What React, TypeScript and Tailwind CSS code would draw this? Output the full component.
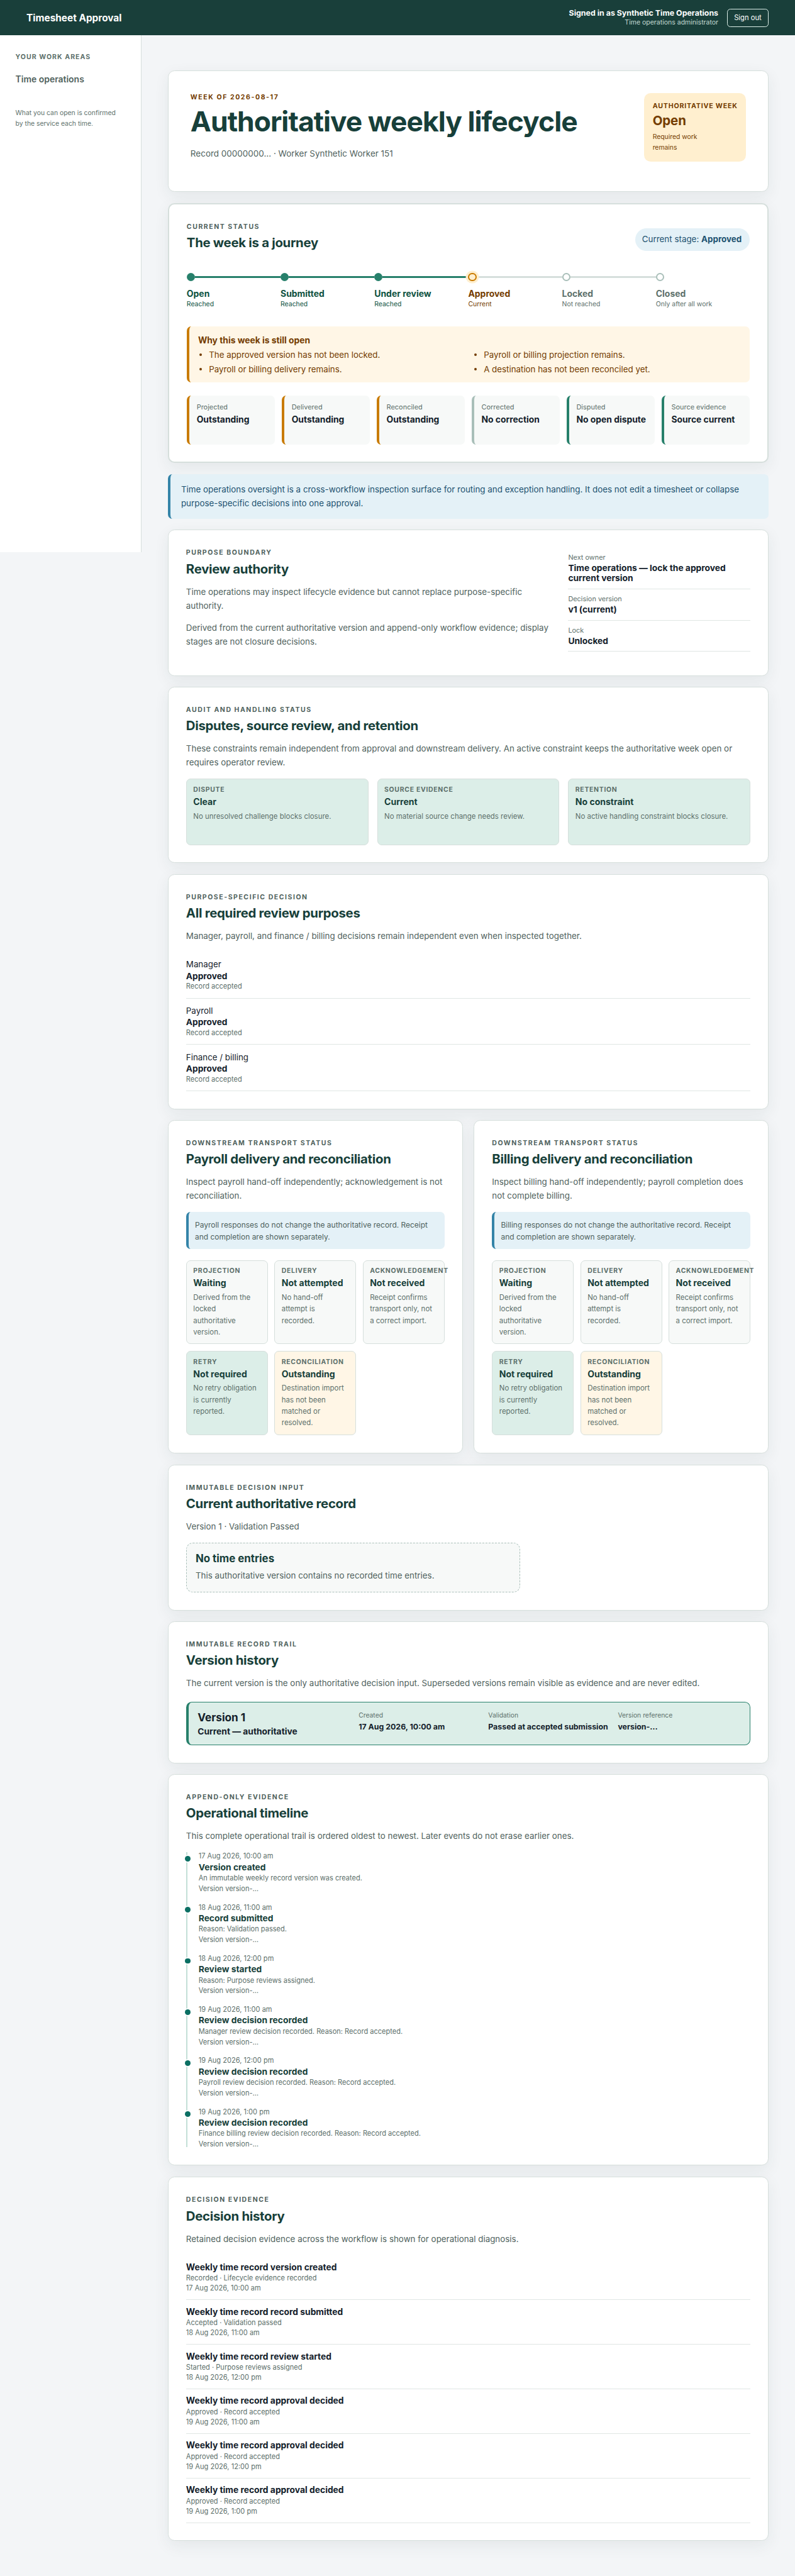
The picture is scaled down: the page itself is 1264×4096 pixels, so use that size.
import React from 'react'
import clsx from 'clsx'

type Tone = 'neutral' | 'good' | 'warn'

const steps = [
  { name: 'Open', note: 'Reached', state: 'done' },
  { name: 'Submitted', note: 'Reached', state: 'done' },
  { name: 'Under review', note: 'Reached', state: 'done' },
  { name: 'Approved', note: 'Current', state: 'current' },
  { name: 'Locked', note: 'Not reached', state: 'todo' },
  { name: 'Closed', note: 'Only after all work', state: 'todo' },
]

const openReasons = [
  'The approved version has not been locked.',
  'Payroll or billing projection remains.',
  'Payroll or billing delivery remains.',
  'A destination has not been reconciled yet.',
]

const facts = [
  { label: 'Projected', value: 'Outstanding', edge: 'border-[#c97b00]' },
  { label: 'Delivered', value: 'Outstanding', edge: 'border-[#c97b00]' },
  { label: 'Reconciled', value: 'Outstanding', edge: 'border-[#c97b00]' },
  { label: 'Corrected', value: 'No correction', edge: 'border-[#a9bfb9]' },
  { label: 'Disputed', value: 'No open dispute', edge: 'border-[#27806b]' },
  { label: 'Source evidence', value: 'Source current', edge: 'border-[#27806b]' },
]

const authority = [
  { label: 'Next owner', value: 'Time operations — lock the approved\ncurrent version' },
  { label: 'Decision version', value: 'v1 (current)' },
  { label: 'Lock', value: 'Unlocked' },
]

const constraints: BoxProps[] = [
  { label: 'Dispute', value: 'Clear', detail: 'No unresolved challenge blocks closure.', tone: 'good' },
  { label: 'Source evidence', value: 'Current', detail: 'No material source change needs review.', tone: 'good' },
  { label: 'Retention', value: 'No constraint', detail: 'No active handling constraint blocks closure.', tone: 'good' },
]

const deliveryBoxes: BoxProps[] = [
  { label: 'Projection', value: 'Waiting', detail: 'Derived from the\nlocked\nauthoritative\nversion.', tone: 'neutral' },
  { label: 'Delivery', value: 'Not attempted', detail: 'No hand-off\nattempt is\nrecorded.', tone: 'neutral' },
  { label: 'Acknowledgement', value: 'Not received', detail: 'Receipt confirms\ntransport only, not\na correct import.', tone: 'neutral' },
  { label: 'Retry', value: 'Not required', detail: 'No retry obligation\nis currently\nreported.', tone: 'good' },
  { label: 'Reconciliation', value: 'Outstanding', detail: 'Destination import\nhas not been\nmatched or\nresolved.', tone: 'warn' },
]

const timeline = [
  { date: '17 Aug 2026, 10:00 am', title: 'Version created', note: 'An immutable weekly record version was created.' },
  { date: '18 Aug 2026, 11:00 am', title: 'Record submitted', note: 'Reason: Validation passed.' },
  { date: '18 Aug 2026, 12:00 pm', title: 'Review started', note: 'Reason: Purpose reviews assigned.' },
  { date: '19 Aug 2026, 11:00 am', title: 'Review decision recorded', note: 'Manager review decision recorded. Reason: Record accepted.' },
  { date: '19 Aug 2026, 12:00 pm', title: 'Review decision recorded', note: 'Payroll review decision recorded. Reason: Record accepted.' },
  { date: '19 Aug 2026, 1:00 pm', title: 'Review decision recorded', note: 'Finance billing review decision recorded. Reason: Record accepted.' },
]

const decisions = [
  { title: 'Weekly time record version created', note: 'Recorded · Lifecycle evidence recorded', date: '17 Aug 2026, 10:00 am' },
  { title: 'Weekly time record record submitted', note: 'Accepted · Validation passed', date: '18 Aug 2026, 11:00 am' },
  { title: 'Weekly time record review started', note: 'Started · Purpose reviews assigned', date: '18 Aug 2026, 12:00 pm' },
  { title: 'Weekly time record approval decided', note: 'Approved · Record accepted', date: '19 Aug 2026, 11:00 am' },
  { title: 'Weekly time record approval decided', note: 'Approved · Record accepted', date: '19 Aug 2026, 12:00 pm' },
  { title: 'Weekly time record approval decided', note: 'Approved · Record accepted', date: '19 Aug 2026, 1:00 pm' },
]

interface CardProps {
  className?: string
  children: React.ReactNode
}

const Card = ({ className, children }: CardProps) => (
  <section
    className={clsx(
      'rounded-[12px] border-[#d6dfdc] bg-white shadow-[0_8px_28px_rgba(23,63,58,0.07)]',
      className,
    )}
  >
    {children}
  </section>
)

interface HeadingProps {
  eyebrow: string
  title: string
  low?: boolean
}

const Heading = ({ eyebrow, title, low }: HeadingProps) => (
  <div>
    <p className="text-[12px] leading-[18px] font-bold tracking-[1.75px] text-[#4f625d] uppercase">{eyebrow}</p>
    <h2
      className={clsx(
        'text-[23.2px] leading-[30px] font-bold tracking-[-0.34px] text-[#173f3a]',
        low ? 'mt-[6.2px]' : 'mt-[4.9px]',
      )}
    >
      {title}
    </h2>
  </div>
)

const Lead = ({ children }: { children: React.ReactNode }) => (
  <p className="mt-[14.2px] text-[15.26px] leading-[24.8px] whitespace-pre-line text-[#4f625d]">{children}</p>
)

interface BoxProps {
  label: string
  value: string
  detail: string
  tone: Tone
}

const Box = ({ label, value, detail, tone }: BoxProps) => (
  <div
    className={clsx(
      'rounded-[8px] border border-[#d6dfdc] px-[12px] pt-[10px]',
      tone === 'neutral' && 'bg-[#f7f9f8]',
      tone === 'good' && 'bg-[#dceee8]',
      tone === 'warn' && 'bg-[#fff6e6]',
    )}
  >
    <p className="text-[11.9px] leading-[18px] font-bold tracking-[0.8px] whitespace-nowrap text-[#5d706b] uppercase">{label}</p>
    <p className="text-[16px] leading-[24px] font-bold text-[#173f3a]">{value}</p>
    <p className="mt-[4.3px] text-[13.04px] leading-[20.8px] whitespace-pre-line text-[#5d706b]">{detail}</p>
  </div>
)

const Header = () => (
  <header className="flex h-[64px] items-start justify-between bg-[#193f3a] px-[48px] text-white">
    <p className="mt-[20px] text-[17.52px] leading-[26px] font-bold">Timesheet Approval</p>
    <div className="flex">
      <div className="mt-[15.2px] text-right">
        <p className="text-[14.13px] leading-[18px] font-bold">Signed in as Synthetic Time Operations</p>
        <p className="text-[12.01px] leading-[17px] text-[#c3dad3]">Time operations administrator</p>
      </div>
      <button className="mt-[16px] ml-[16px] h-[33px] w-[75px] rounded-[6px] border border-[#dceee8] pb-px text-[12.8px] font-normal">
        Sign out
      </button>
    </div>
  </header>
)

const Sidebar = () => (
  <aside className="h-[936px] w-[256px] shrink-0 border-r border-[#d6dfdc] bg-white px-[28px] pt-[30.7px]">
    <p className="text-[12px] leading-[18px] font-bold tracking-[1.2px] text-[#5d706b]">YOUR WORK AREAS</p>
    <p className="mt-[18.8px] text-[15.9px] leading-[26px] font-semibold text-[#4f625d]">Time operations</p>
    <p className="mt-[38.7px] text-[11.86px] leading-[19.1px] text-[#5d706b]">
      What you can open is confirmed
      <br />
      by the service each time.
    </p>
  </aside>
)

const Hero = () => (
  <Card className="flex h-[220px] items-start justify-between border p-[40px]">
    <div>
      <p className="text-[12px] leading-[16px] font-bold tracking-[1.8px] text-[#743c00]">WEEK OF 2026-08-17</p>
      <h1 className="mt-[10px] text-[50.6px] leading-[52px] font-bold tracking-[-1.12px] text-[#173f3a]">
        Authoritative weekly lifecycle
      </h1>
      <p className="mt-[19.7px] text-[15.37px] leading-[25px] text-[#4f625d]">
        Record 00000000… · Worker Synthetic Worker 151
      </p>
    </div>
    <div className="h-[124px] w-[185px] rounded-[12px] bg-[#ffefcf] px-[16px] pt-[14px] text-[#743c00]">
      <p className="text-[12.2px] leading-[19px] font-bold tracking-[0.88px] whitespace-nowrap">AUTHORITATIVE WEEK</p>
      <p className="mt-[2.7px] text-[23.3px] leading-[28px] font-bold tracking-[-0.1px]">Open</p>
      <p className="mt-[6.5px] text-[11.84px] leading-[19.1px]">
        Required work
        <br />
        remains
      </p>
    </div>
  </Card>
)

const Journey = () => (
  <ol className="mt-[39.1px] flex">
    {steps.map((step, i) => (
      <li key={step.name} className="w-[170px]">
        <div className="flex h-[15px] items-center">
          {step.state === 'done' && <span className="size-[15px] shrink-0 rounded-full bg-[#27806b]" />}
          {step.state === 'current' && (
            <span className="z-10 size-[15px] shrink-0 rounded-full border-[2.3px] border-[#c97b00] bg-[#ffefcf] shadow-[0_0_0_4px_#ffefcf]" />
          )}
          {step.state === 'todo' && <span className="size-[15px] shrink-0 rounded-full border-[2.3px] border-[#a9bfb9] bg-white" />}
          {i < steps.length - 1 && (
            <span className={clsx('h-[3px] flex-1', step.state === 'done' ? 'bg-[#27806b]' : 'bg-[#d6dfdc]')} />
          )}
        </div>
        <div
          className={clsx(
            step.state === 'done' && 'text-[#0d5140]',
            step.state === 'current' && 'text-[#743c00]',
            step.state === 'todo' && 'text-[#5d706b]',
          )}
        >
          <p className="mt-[12.5px] text-[15.9px] leading-[20px] font-bold">{step.name}</p>
          <p className="mt-px text-[11.91px] leading-[18px]">{step.note}</p>
        </div>
      </li>
    ))}
  </ol>
)

const CurrentStatus = () => (
  <Card className="h-[470.7px] border-[2.3px] px-[32px] pt-[32px]">
    <div className="flex items-start justify-between">
      <Heading eyebrow="Current status" title="The week is a journey" />
      <p className="mt-[11px] h-[41px] w-[207px] rounded-full bg-[#e4f1f7] px-[12px] text-[15.26px] leading-[41px] whitespace-nowrap text-[#1d5270]">
        Current stage: <strong className="font-bold">Approved</strong>
      </p>
    </div>
    <Journey />
    <div className="mt-[30.5px] h-[102px] rounded-[8px] border-l-[4.6px] border-[#c97b00] bg-[#fff6e6] px-[16px] pt-[14px] text-[#743c00]">
      <h3 className="text-[15.78px] leading-[23px] font-bold">Why this week is still open</h3>
      <ul className="mt-[1.6px] grid grid-cols-[498px_1fr] text-[15.21px] leading-[26px]">
        {openReasons.map((reason) => (
          <li key={reason} className="flex items-center">
            <span className="mr-[12.2px] ml-[2.5px] size-[5px] rounded-full bg-[#743c00]" />
            {reason}
          </li>
        ))}
      </ul>
    </div>
    <div className="mt-[24px] grid grid-cols-6 gap-[12px]">
      {facts.map((fact) => (
        <div key={fact.label} className={clsx('h-[88px] rounded-[8px] border-l-[4.6px] bg-[#f7f9f8] pt-[11.7px] pl-[13.5px]', fact.edge)}>
          <p className="text-[12.49px] leading-[18px] text-[#5d706b]">{fact.label}</p>
          <p className="mt-[2.7px] text-[15.8px] leading-[22px] font-bold whitespace-nowrap text-[#14212b]">{fact.value}</p>
        </div>
      ))}
    </div>
  </Card>
)

const ReviewAuthority = () => (
  <Card className="flex h-[265px] justify-between border px-[32px] pt-[32px]">
    <div className="w-[668px]">
      <Heading eyebrow="Purpose boundary" title="Review authority" low />
      <Lead>{'Time operations may inspect lifecycle evidence but cannot replace purpose-specific\nauthority.'}</Lead>
      <p className="mt-[15.5px] text-[15.26px] leading-[24.8px] whitespace-pre-line text-[#4f625d]">
        {'Derived from the current authoritative version and append-only workflow evidence; display\nstages are not closure decisions.'}
      </p>
    </div>
    <dl className="w-[330px]">
      {authority.map((item) => (
        <div key={item.label} className="border-b border-[#e0e6e4] pt-[9.4px] pb-[9px]">
          <dt className="text-[12.45px] leading-[17px] text-[#5d706b]">{item.label}</dt>
          <dd className="mt-[2.2px] text-[15.74px] leading-[18px] font-bold whitespace-pre-line text-[#14212b]">{item.value}</dd>
        </div>
      ))}
    </dl>
  </Card>
)

const Constraints = () => (
  <Card className="h-[319.2px] border px-[32px] pt-[32px]">
    <Heading eyebrow="Audit and handling status" title="Disputes, source review, and retention" />
    <Lead>
      {'These constraints remain independent from approval and downstream delivery. An active constraint keeps the authoritative week open or\nrequires operator review.'}
    </Lead>
    <div className="mt-[16.5px] grid h-[120px] grid-cols-3 gap-[16px]">
      {constraints.map((item) => (
        <Box key={item.label} {...item} />
      ))}
    </div>
  </Card>
)

const Purposes = () => (
  <Card className="h-[425.8px] border px-[32px] pt-[32px]">
    <Heading eyebrow="Purpose-specific decision" title="All required review purposes" />
    <Lead>Manager, payroll, and finance / billing decisions remain independent even when inspected together.</Lead>
    <ul className="mt-[16.1px]">
      {['Manager', 'Payroll', 'Finance / billing'].map((name) => (
        <li key={name} className="h-[84px] border-b border-[#e0e6e4] pt-[12px] text-[#14212b]">
          <p className="text-[15.2px] leading-[21px]">{name}</p>
          <p className="text-[15.6px] leading-[21px] font-bold">Approved</p>
          <p className="text-[12.6px] leading-[18px] text-[#5d706b]">Record accepted</p>
        </li>
      ))}
    </ul>
  </Card>
)

interface DeliveryProps {
  name: string
  lead: string
}

const Delivery = ({ name, lead }: DeliveryProps) => (
  <Card className="h-[604px] border px-[32px] pt-[32px]">
    <Heading eyebrow="Downstream transport status" title={`${name} delivery and reconciliation`} />
    <Lead>{lead}</Lead>
    <p className="mt-[16.7px] h-[67px] rounded-[8px] border-l-[4.6px] border-[#3484a8] bg-[#e4f1f7] pt-[12px] pl-[11.6px] text-[13.66px] leading-[22.2px] whitespace-pre-line text-[#4f625d]">
      {`${name} responses do not change the authoritative record. Receipt\nand completion are shown separately.`}
    </p>
    <div className="mt-[20px] grid grid-cols-3 grid-rows-[152.5px_152.5px] gap-[12px]">
      {deliveryBoxes.map((item) => (
        <Box key={item.label} {...item} />
      ))}
    </div>
  </Card>
)

const CurrentRecord = () => (
  <Card className="h-[264.3px] border px-[32px] pt-[32px]">
    <Heading eyebrow="Immutable decision input" title="Current authoritative record" />
    <Lead>Version 1 · Validation Passed</Lead>
    <div className="mt-[16.7px] h-[90px] w-[605px] rounded-[12px] border border-dashed border-[#a9bfb9] bg-[#f7f9f8] px-[16px] pt-[15px]">
      <h3 className="text-[19.24px] leading-[26px] font-bold text-[#173f3a]">No time entries</h3>
      <p className="mt-[5.5px] text-[15.26px] leading-[24.8px] text-[#4f625d]">
        This authoritative version contains no recorded time entries.
      </p>
    </div>
  </Card>
)

const versionMeta = [
  { label: 'Created', value: '17 Aug 2026, 10:00 am' },
  { label: 'Validation', value: 'Passed at accepted submission' },
  { label: 'Version reference', value: 'version-…' },
]

const VersionHistory = () => (
  <Card className="h-[256.7px] border px-[32px] pt-[32px]">
    <Heading eyebrow="Immutable record trail" title="Version history" />
    <Lead>The current version is the only authoritative decision input. Superseded versions remain visible as evidence and are never edited.</Lead>
    <div className="mt-[20.5px] flex h-[78.6px] rounded-[10px] border border-l-[5px] border-[#27806b] bg-[#dceee8] pl-[16.5px] text-[#14212b]">
      <div className="w-[291.5px] shrink-0 pt-[14.7px]">
        <p className="text-[19.58px] leading-[26px] font-bold">Version 1</p>
        <p className="mt-[0.5px] text-[15.73px] leading-[23px] font-bold">Current — authoritative</p>
      </div>
      {versionMeta.map((item) => (
        <div key={item.label} className="w-[234.9px] shrink-0 pt-[15px]">
          <p className="text-[11.8px] leading-[17px] text-[#5d706b]">{item.label}</p>
          <p className="mt-[2px] text-[14.1px] leading-[20px] font-bold whitespace-nowrap">{item.value}</p>
        </div>
      ))}
    </div>
  </Card>
)

const Timeline = () => (
  <Card className="h-[709px] border px-[32px] pt-[32px]">
    <Heading eyebrow="Append-only evidence" title="Operational timeline" />
    <Lead>This complete operational trail is ordered oldest to newest. Later events do not erase earlier ones.</Lead>
    <ul className="mt-[16.5px] h-[534.2px] border-l-[2.3px] border-[#c3dfd7]">
      {timeline.map((event) => (
        <li key={event.date} className="flex h-[92.6px]">
          <span className="mt-[6.6px] -ml-[4px] size-[10px] shrink-0 rounded-full bg-[#0b6f63] shadow-[0_0_0_2px_#ffffff]" />
          <div className="ml-[14.4px] text-[12.6px] text-[#5d706b]">
            <p className="leading-[15px]">{event.date}</p>
            <h3 className="mt-[2.4px] text-[15.75px] leading-[20px] font-bold text-[#173f3a]">{event.title}</h3>
            <p className="leading-[19px]">{event.note}</p>
            <p className="leading-[19px]">Version version-…</p>
          </div>
        </li>
      ))}
    </ul>
  </Card>
)

const DecisionHistory = () => (
  <Card className="h-[660.3px] border px-[32px] pt-[32px]">
    <Heading eyebrow="Decision evidence" title="Decision history" low />
    <Lead>Retained decision evidence across the workflow is shown for operational diagnosis.</Lead>
    <ul className="mt-[16.4px]">
      {decisions.map((item) => (
        <li key={item.date} className="h-[80.8px] border-b border-[#e0e6e4] pt-[11px] text-[12.62px] leading-[18.6px] text-[#5d706b]">
          <h3 className="text-[15.76px] leading-[21px] font-bold text-[#14212b]">{item.title}</h3>
          <p>{item.note}</p>
          <p>{item.date}</p>
        </li>
      ))}
    </ul>
  </Card>
)

export default function App() {
  return (
    <div className="h-[4096px] overflow-hidden bg-[#f3f5f7] font-['Inter',sans-serif]">
      <div className="[zoom:0.8776]">
        <Header />
        <div className="flex">
          <Sidebar />
          <main className="flex flex-1 flex-col gap-[20px] px-[48px] py-[64px]">
            <Hero />
            <CurrentStatus />
            <p className="h-[81px] rounded-[8px] border-l-[4.6px] border-[#3484a8] bg-[#e4f1f7] pt-[16.6px] pl-[19.5px] text-[15.27px] leading-[24.8px] whitespace-pre-line text-[#1d5270]">
              {'Time operations oversight is a cross-workflow inspection surface for routing and exception handling. It does not edit a timesheet or collapse\npurpose-specific decisions into one approval.'}
            </p>
            <ReviewAuthority />
            <Constraints />
            <Purposes />
            <div className="grid grid-cols-2 gap-[20px]">
              <Delivery name="Payroll" lead={'Inspect payroll hand-off independently; acknowledgement is not\nreconciliation.'} />
              <Delivery name="Billing" lead={'Inspect billing hand-off independently; payroll completion does\nnot complete billing.'} />
            </div>
            <CurrentRecord />
            <VersionHistory />
            <Timeline />
            <DecisionHistory />
          </main>
        </div>
      </div>
    </div>
  )
}
